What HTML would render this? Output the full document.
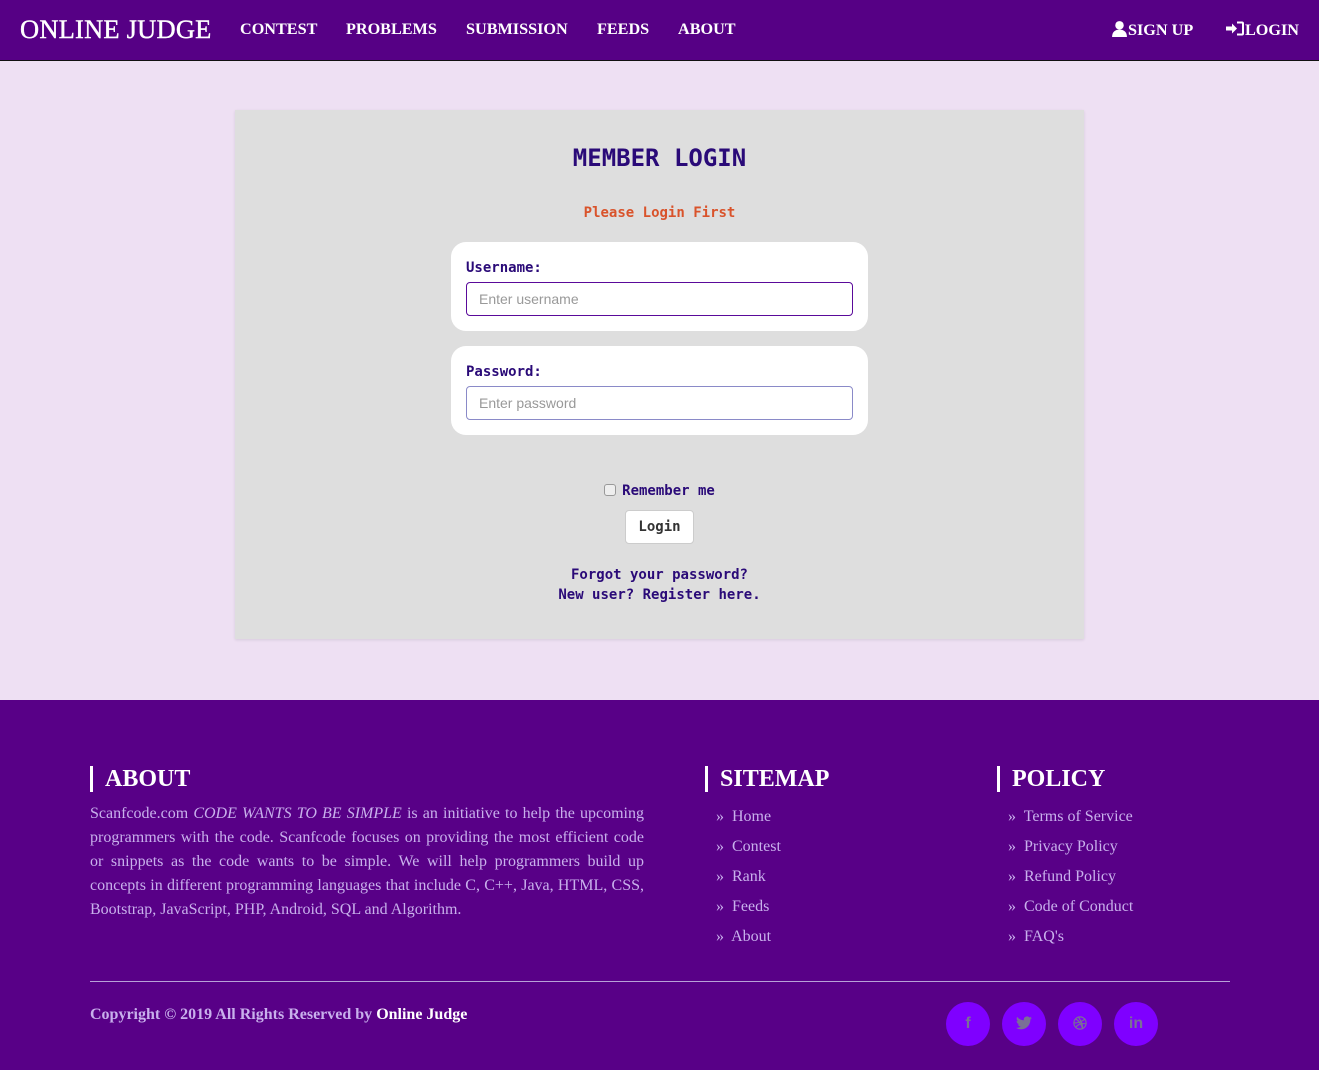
<!DOCTYPE html>
<html><head><meta charset="utf-8"><style>
*{box-sizing:border-box;margin:0;padding:0}
body{width:1319px;height:1070px;overflow:hidden;background:#eee0f3;font-family:"Liberation Serif",serif}
.nav{height:61px;background:#560085;border-bottom:1px solid #111;position:relative;color:#fff}
.brand{position:absolute;left:20px;top:14px;font-size:26.5px;letter-spacing:0.2px;-webkit-text-stroke:0.4px #fff}
.nav a{position:absolute;top:20px;font-size:16.2px;font-weight:bold;color:#fff;text-decoration:none}
.card{position:absolute;left:235px;top:110px;width:849px;height:529px;background:#dedede;box-shadow:0 1px 3px rgba(0,0,0,.1)}
.mono{font-family:"DejaVu Sans Mono","Liberation Mono",monospace;font-weight:bold}
h1{position:absolute;top:34px;width:100%;text-align:center;font-size:24px;color:#2a0a78}
.plf{position:absolute;top:95px;width:100%;text-align:center;font-size:14px;color:#d9532b}
.box{position:absolute;left:216px;width:417px;height:89px;background:#fff;border-radius:15px}
.box label{position:absolute;left:15px;top:18px;font-size:14px;color:#2a0a78}
.box .in{position:absolute;left:15px;top:40px;width:387px;height:34px;border:1px solid #5a0a9a;border-radius:4px;font-family:"Liberation Sans",sans-serif;font-size:14px;color:#999;padding:8px 12px}
.c{position:absolute;width:100%;text-align:center;font-size:14px;color:#2a0a78}
.foot{position:absolute;left:0;top:700px;width:1319px;height:370px;background:#580087;color:#c8b0ec}
.fh{position:absolute;top:66px;font-size:24px;font-weight:bold;color:#fff;border-left:3px solid #fff;padding-left:12px;line-height:26px}
.fl{position:absolute;font-size:16px;line-height:30px}
.sc{position:absolute;top:302px;width:44px;height:44px;border-radius:50%;background:#7f00ff;color:#7a6f96;font-family:"Liberation Sans",sans-serif;font-weight:bold;font-size:16px;text-align:center;line-height:44px}
</style></head><body>
<div class="nav">
<div class="brand">ONLINE JUDGE</div>
<a style="left:240px">CONTEST</a><a style="left:346px">PROBLEMS</a><a style="left:466px">SUBMISSION</a><a style="left:597px">FEEDS</a><a style="left:678px">ABOUT</a>
<a style="left:1111px"><svg width="17" height="17" viewBox="0 0 16 16" style="vertical-align:-2px"><circle cx="8" cy="5" r="4" fill="#fff"/><path d="M1 16c0-5 3-7 7-7s7 2 7 7z" fill="#fff"/></svg>SIGN UP</a>
<a style="left:1226px"><svg width="19" height="17" viewBox="0 0 19 16" style="vertical-align:-2px"><path d="M0 6h6V3l5 5-5 5v-3H0z" fill="#fff"/><path d="M11 1h5a2 2 0 012 2v10a2 2 0 01-2 2h-5v-2h5V3h-5z" fill="#fff"/></svg>LOGIN</a>
</div>
<div class="card mono">
<h1>MEMBER LOGIN</h1>
<div class="plf">Please Login First</div>
<div class="box" style="top:132px"><label>Username:</label><div class="in" style="font-weight:normal">Enter username</div></div>
<div class="box" style="top:236px"><label>Password:</label><div class="in" style="font-weight:normal;border-color:#8a8ac8">Enter password</div></div>
<div class="c" style="top:373px"><span style="display:inline-block;width:12px;height:12px;border:1px solid #999;border-radius:3px;background:#eee;vertical-align:-1px;margin-right:6px"></span>Remember me</div>
<div style="position:absolute;left:390px;top:400px;width:69px;height:34px;background:#fff;border:1px solid #ccc;border-radius:4px;text-align:center;line-height:33px;font-size:14px;color:#333">Login</div>
<div class="c" style="top:457px">Forgot your password?</div>
<div class="c" style="top:477px">New user? Register here.</div>
</div>
<div class="foot">
<div class="fh" style="left:90px">ABOUT</div>
<div style="position:absolute;left:90px;top:102px;width:554px;font-size:16px;line-height:24px;text-align:justify">Scanfcode.com <i>CODE WANTS TO BE SIMPLE</i> is an initiative to help the upcoming programmers with the code. Scanfcode focuses on providing the most efficient code or snippets as the code wants to be simple. We will help programmers build up concepts in different programming languages that include C, C++, Java, HTML, CSS, Bootstrap, JavaScript, PHP, Android, SQL and Algorithm.</div>
<div class="fh" style="left:705px">SITEMAP</div>
<div class="fl" style="left:716px;top:102px">»&nbsp; Home<br>»&nbsp; Contest<br>»&nbsp; Rank<br>»&nbsp; Feeds<br>»&nbsp; About</div>
<div class="fh" style="left:997px">POLICY</div>
<div class="fl" style="left:1008px;top:102px">»&nbsp; Terms of Service<br>»&nbsp; Privacy Policy<br>»&nbsp; Refund Policy<br>»&nbsp; Code of Conduct<br>»&nbsp; FAQ's</div>
<div style="position:absolute;left:90px;top:281px;width:1140px;border-top:1px solid #b8a0d8"></div>
<div style="position:absolute;left:90px;top:306px;font-size:16px;font-weight:bold">Copyright © 2019 All Rights Reserved by <span style="color:#fff">Online Judge</span></div>
<div class="sc" style="left:946px">f</div>
<div class="sc" style="left:1002px"><svg width="16" height="14" viewBox="0 0 24 20" style="vertical-align:-2px"><path d="M24 2.4a10 10 0 01-2.8.8A5 5 0 0023.3.5a10 10 0 01-3.1 1.2A4.9 4.9 0 0011.8 6 14 14 0 011.7.9a4.9 4.9 0 001.5 6.6A5 5 0 01.9 6.9a4.9 4.9 0 004 4.9 5 5 0 01-2.2.1 4.9 4.9 0 004.6 3.4A9.9 9.9 0 010 17.3 14 14 0 007.5 19.5c9 0 14-7.5 14-14v-.6A10 10 0 0024 2.4z" fill="#7a6f96"/></svg></div>
<div class="sc" style="left:1058px"><svg width="14" height="14" viewBox="0 0 16 16" style="vertical-align:-2px" fill="none" stroke="#7a6f96" stroke-width="1.3"><circle cx="8" cy="8" r="7"/><path d="M3 3c4 3 7 7 8 12M1 8c5 0 10-2 13-5M6 1c3 4 5 8 5 13M3 13c3-4 7-5 12-4"/></svg></div>
<div class="sc" style="left:1114px">in</div>
</div>
</body></html>
